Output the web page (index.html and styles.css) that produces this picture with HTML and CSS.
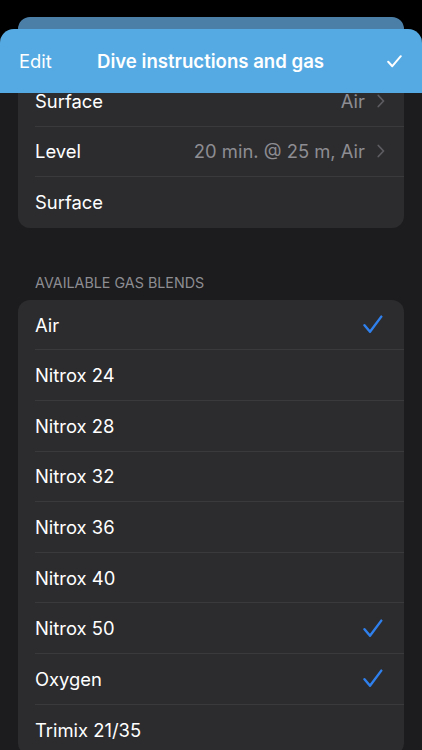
FILE: index.html
```html
<!DOCTYPE html>
<html lang="en">
<head>
    <meta charset="UTF-8">
    <meta name="viewport" content="width=device-width, initial-scale=1.0">
    <title>Dive instructions and gas</title>
    <link rel="stylesheet" href="styles.css">
</head>
<body>
    <div class="screen">
        <div class="sheet-behind"></div>

        <div class="sheet">
            <header class="nav">
                <span class="nav-edit">Edit</span>
                <span class="nav-title">Dive instructions and gas</span>
                <svg class="nav-done" width="15" height="13" viewBox="0 0 15 13">
                    <path d="M1.2 6.8 L5.3 11.2 L13.8 1.2" fill="none" stroke="#fff" stroke-width="2" stroke-linecap="round" stroke-linejoin="round"/>
                </svg>
            </header>

            <div class="scroll">
                <div class="content">
                    <!-- Dive plan -->
                    <div class="group">
                        <div class="row">
                            <div class="row-inner">
                                <span class="row-label">Surface</span>
                                <span class="row-value">Air</span>
                                <svg class="chevron" width="8" height="14" viewBox="0 0 8 14">
                                    <path d="M1.3 1.5 L6.5 7 L1.3 12.5" fill="none" stroke="#5c5c61" stroke-width="1.8" stroke-linecap="round" stroke-linejoin="round"/>
                                </svg>
                            </div>
                        </div>
                        <div class="row">
                            <div class="row-inner">
                                <span class="row-label">Level</span>
                                <span class="row-value">20 min. @ 25 m, Air</span>
                                <svg class="chevron" width="8" height="14" viewBox="0 0 8 14">
                                    <path d="M1.3 1.5 L6.5 7 L1.3 12.5" fill="none" stroke="#5c5c61" stroke-width="1.8" stroke-linecap="round" stroke-linejoin="round"/>
                                </svg>
                            </div>
                        </div>
                        <div class="row">
                            <div class="row-inner">
                                <span class="row-label">Surface</span>
                            </div>
                        </div>
                    </div>

                    <div class="section-title">AVAILABLE GAS BLENDS</div>

                    <!-- Gas blends -->
                    <div class="group" id="gasList"></div>
                </div>
            </div>
        </div>
    </div>

    <script>
        const gases = [
            { name: 'Air', checked: true },
            { name: 'Nitrox 24', checked: false },
            { name: 'Nitrox 28', checked: false },
            { name: 'Nitrox 32', checked: false },
            { name: 'Nitrox 36', checked: false },
            { name: 'Nitrox 40', checked: false },
            { name: 'Nitrox 50', checked: true },
            { name: 'Oxygen', checked: true },
            { name: 'Trimix 21/35', checked: false }
        ];

        const check = '<svg class="check" width="20" height="19" viewBox="0 0 20 19">' +
            '<path d="M1.5 10.2 L7 16.8 L18.3 1.6" fill="none" stroke="#2f80ed" stroke-width="2.4" stroke-linecap="round" stroke-linejoin="round"/></svg>';

        const list = document.getElementById('gasList');
        gases.forEach(function (gas) {
            const row = document.createElement('div');
            row.className = 'row';
            row.innerHTML = '<div class="row-inner"><span class="row-label">' + gas.name + '</span>' +
                (gas.checked ? check : '') + '</div>';
            list.appendChild(row);
        });
    </script>
</body>
</html>
```

FILE: styles.css
```css
* {
    box-sizing: border-box;
}

body {
    margin: 0;
    background-color: #000;
    font-family: Inter, "Noto Sans", sans-serif;
    color: #fff;
}

.screen {
    width: 422px;
    height: 750px;
    overflow: hidden;
    display: flex;
    flex-direction: column;
    padding-top: 17px;
    background-color: #000;
}

.sheet-behind {
    height: 12px;
    margin: 0 18px;
    border-radius: 12px 12px 0 0;
    background-color: #4c7fa7;
    flex-shrink: 0;
}

.sheet {
    flex: 1;
    display: flex;
    flex-direction: column;
    min-height: 0;
    border-radius: 14px 14px 0 0;
    overflow: hidden;
    background-color: #1c1c1e;
}

/* Navigation bar */
.nav {
    height: 64px;
    flex-shrink: 0;
    display: grid;
    grid-template-columns: 1fr auto 1fr;
    align-items: center;
    padding: 0 20px 0 19px;
    background-color: #55aae3;
}

.nav-edit {
    font-size: 18.4px;
}

.nav-title {
    font-size: 18.6px;
    font-weight: 600;
}

.nav-done {
    justify-self: end;
}

/* List content */
.scroll {
    flex: 1;
    min-height: 0;
    overflow: hidden;
}

.content {
    margin-top: -17px;
    padding: 0 18px;
}

.group {
    background-color: #2c2c2e;
    border-radius: 12px;
    overflow: hidden;
}

.row {
    height: 50.6px;
    display: flex;
    padding-left: 17px;
}

.row-inner {
    flex: 1;
    display: flex;
    align-items: center;
    padding-right: 19px;
    border-bottom: 1px solid #3a3a3c;
}

.row:last-child .row-inner {
    border-bottom: none;
}

.row-label {
    flex: 1;
    font-size: 18.4px;
}

.row-value {
    font-size: 18.4px;
    color: #8d8d92;
    margin-right: 12px;
}

.check {
    margin-right: 2px;
}

.section-title {
    margin: 46px 0 8px;
    padding-left: 17px;
    line-height: 18px;
    font-size: 14.3px;
    color: #8d8d92;
}
```
